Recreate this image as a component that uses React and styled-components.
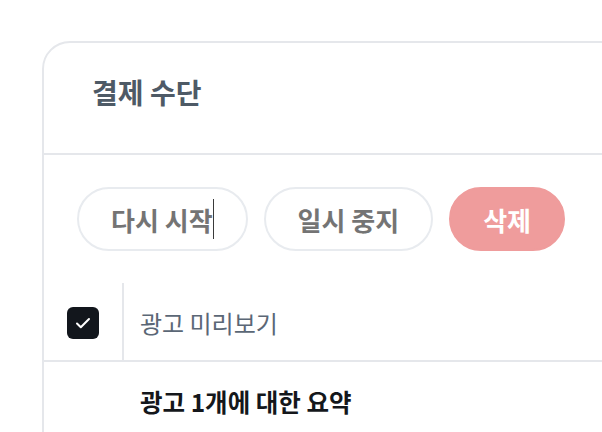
import React from "react";
import styled, { createGlobalStyle } from "styled-components";

const Global = createGlobalStyle`
  html, body { margin: 0; padding: 0; background: #ffffff; overflow: hidden; }
  body { font-family: "Noto Sans CJK KR", "Noto Sans", sans-serif; }
  * { box-sizing: border-box; }
`;

const Page = styled.div`
  padding: 41px 0 0 42px;
  width: 602px;
  height: 432px;
  overflow: hidden;
`;

const Card = styled.section`
  width: 760px;
  border: 2px solid #e5e7eb;
  border-radius: 28px 28px 0 0;
  background: #fff;
  min-height: 420px;
`;

const Header = styled.header`
  height: 112px;
  padding: 31px 0 0 48px;
  border-bottom: 2px solid #e5e7eb;
`;

const Title = styled.h2`
  margin: 0;
  font-size: 28px;
  line-height: 36px;
  font-weight: 700;
  color: #4e5a66;
`;

const Toolbar = styled.div`
  display: flex;
  gap: 16px;
  padding: 32px 0 32px 33px;
`;

const Pill = styled.button`
  height: 64px;
  padding: 0 ${p => (p.$danger ? 32 : 32)}px;
  border-radius: 32px;
  border: 2px solid ${p => (p.$danger ? "#ef9c9c" : "#e8ebef")};
  background: ${p => (p.$danger ? "#ef9c9c" : "#ffffff")};
  color: ${p => (p.$danger ? "#ffffff" : "#747474")};
  font-family: inherit;
  font-size: 26px;
  font-weight: 700;
  display: flex;
  align-items: center;
`;

const Caret = styled.span`
  display: inline-block;
  width: 1px;
  height: 40px;
  margin-left: 0;
  background: #3a3a3a;
`;

const HeadRow = styled.div`
  display: flex;
  height: 79px;
  border-bottom: 2px solid #e5e7eb;
`;

const CheckCell = styled.div`
  width: 80px;
  border-right: 2px solid #e5e7eb;
  display: flex;
  align-items: center;
  justify-content: center;
  padding-top: 2px;
`;

const CheckBox = styled.span`
  width: 32px;
  height: 32px;
  border-radius: 6px;
  background: #12161c;
  display: flex;
  align-items: center;
  justify-content: center;
`;

const HeadLabel = styled.div`
  display: flex;
  align-items: center;
  padding-left: 16px;
  font-size: 24px;
  color: #5b6776;
  padding-top: 2px;
`;

const SummaryRow = styled.div`
  padding: 22px 0 0 96px;
  font-size: 24.5px;
  font-weight: 700;
  color: #14171b;
  line-height: 36px;
`;

export default function App() {
  return (
    <>
      <Global />
      <Page>
        <Card>
          <Header>
            <Title>결제 수단</Title>
          </Header>
          <Toolbar>
            <Pill>다시 시작<Caret /></Pill>
            <Pill>일시 중지</Pill>
            <Pill $danger>삭제</Pill>
          </Toolbar>
          <HeadRow>
            <CheckCell>
              <CheckBox>
                <svg width="20" height="20" viewBox="0 0 20 20" fill="none">
                  <path d="M4 10.5l3.8 3.8L16 6" stroke="#fff" strokeWidth="2" strokeLinecap="round" strokeLinejoin="round" />
                </svg>
              </CheckBox>
            </CheckCell>
            <HeadLabel>광고 미리보기</HeadLabel>
          </HeadRow>
          <SummaryRow>광고 1개에 대한 요약</SummaryRow>
        </Card>
      </Page>
    </>
  );
}
